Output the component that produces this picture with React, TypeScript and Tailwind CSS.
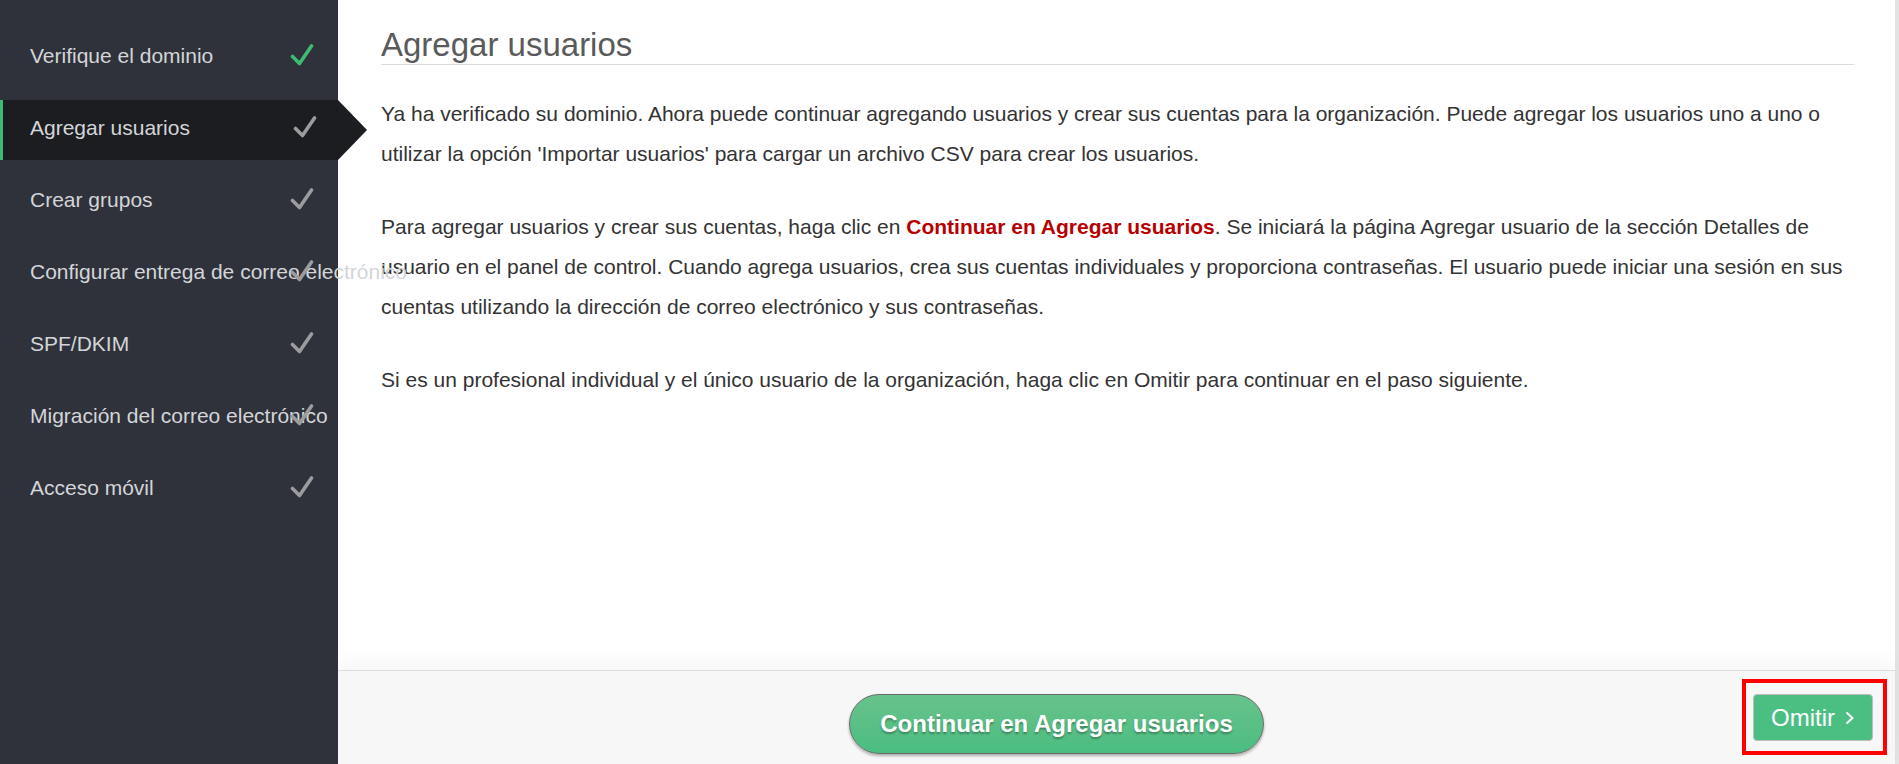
import React from "react";

interface StepProps {
  label: string;
  done?: boolean;
  active?: boolean;
}

const Check = ({ color }: { color: string }) => (
  <svg width="24" height="24" viewBox="0 0 24 24" fill="none">
    <polyline
      points="2.5,13.5 9.5,20.5 21.5,3"
      stroke={color}
      strokeWidth="3.6"
      strokeLinecap="round"
      strokeLinejoin="round"
    />
  </svg>
);

const Step = ({ label, done = false, active = false }: StepProps) => (
  <div
    className={`relative h-[60px] flex items-center whitespace-nowrap ${
      active ? "bg-[#1c1d21] border-l-[3px] border-[#3dbb73] pl-[27px]" : "pl-[30px]"
    }`}
  >
    <span className="text-[21px] leading-[24px] -mt-[5px] text-[#d3d5d9]">{label}</span>
    <div className="absolute left-[290px] top-[15px]">
      <Check color={done ? "#3dbb73" : "#9b9c9e"} />
    </div>
    {active && (
      <svg
        className="absolute right-[-29px] top-0"
        width="29"
        height="60"
        viewBox="0 0 29 60"
      >
        <polygon points="0,0 29,30 0,60" fill="#1c1d21" />
      </svg>
    )}
  </div>
);

const steps: StepProps[] = [
  { label: "Verifique el dominio", done: true },
  { label: "Agregar usuarios", active: true },
  { label: "Crear grupos" },
  { label: "Configurar entrega de correo electrónico" },
  { label: "SPF/DKIM" },
  { label: "Migración del correo electrónico" },
  { label: "Acceso móvil" },
];

const App = () => {
  return (
    <div className="flex h-[764px] w-[1899px] overflow-hidden font-['Liberation_Sans',Arial,sans-serif]">
      <aside className="relative z-10 w-[338px] shrink-0 bg-[#2f323a] pt-[28px] flex flex-col gap-[12px]">
        {steps.map((s) => (
          <Step key={s.label} {...s} />
        ))}
      </aside>

      <main className="flex-1 flex flex-col border-r-[4px] border-[#e3e3e3]">
        <div className="flex-1 bg-white pl-[43px] pr-[41px] pt-[26px]">
          <h1 className="text-[33px] leading-[38px] text-[#5a5a5a] border-b border-[#dcdcdc]">
            Agregar usuarios
          </h1>
          <div className="mt-[29px] text-[21px] leading-[40px] text-[#333]">
            <p className="mb-[33px]">
              Ya ha verificado su dominio. Ahora puede continuar agregando usuarios y crear sus
              cuentas para la organización. Puede agregar los usuarios uno a uno o utilizar la
              opción 'Importar usuarios' para cargar un archivo CSV para crear los usuarios.
            </p>
            <p className="mb-[33px]">
              Para agregar usuarios y crear sus cuentas, haga clic en{" "}
              <b className="text-[#b80000]">Continuar en Agregar usuarios</b>. Se iniciará la
              página Agregar usuario de la sección Detalles de usuario en el panel de control.
              Cuando agrega usuarios, crea sus cuentas individuales y proporciona contraseñas. El
              usuario puede iniciar una sesión en sus cuentas utilizando la dirección de correo
              electrónico y sus contraseñas.
            </p>
            <p>
              Si es un profesional individual y el único usuario de la organización, haga clic en
              Omitir para continuar en el paso siguiente.
            </p>
          </div>
        </div>

        <footer className="h-[94px] shrink-0 flex items-start border-t border-[#dcdcdc] bg-[#f7f7f7] shadow-[0_-10px_16px_rgba(0,0,0,0.035)] pl-[511px] pr-[8px]">
          <button className="mt-[23px] w-[415px] h-[60px] rounded-full border border-[#6b6b6b] bg-gradient-to-b from-[#68c28c] to-[#4abd80] shadow-[0_2px_3px_rgba(0,0,0,0.3)] text-white font-bold text-[24px] [text-shadow:0_2px_2px_rgba(0,0,0,0.3)]">
            Continuar en Agregar usuarios
          </button>
          <div className="ml-auto mt-[8px] w-[145px] h-[76px] border-[4px] border-[#ff0000] pt-[11px] pl-[7px]">
            <button className="w-[120px] h-[47px] rounded-[4px] border border-[#bdbdbd] bg-[#4bbe82] text-white text-[24px] flex items-center justify-center gap-[10px]">
              <span>Omitir</span>
              <svg width="10" height="14" viewBox="0 0 10 14" fill="none">
                <polyline
                  points="2,2 7.5,7 2,12"
                  stroke="#ffffff"
                  strokeWidth="2"
                  strokeLinecap="round"
                  strokeLinejoin="round"
                />
              </svg>
            </button>
          </div>
        </footer>
      </main>
    </div>
  );
};

export default App;
